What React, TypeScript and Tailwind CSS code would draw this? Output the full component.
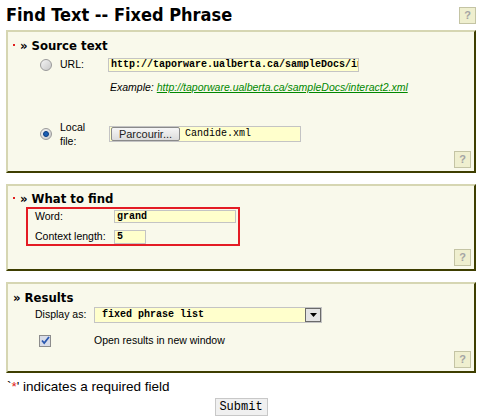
const sans = "font-['Liberation_Sans',Arial,sans-serif]";
const head = "font-['DejaVu_Sans_Condensed','DejaVu_Sans',sans-serif]";
const mono = "font-['Liberation_Mono','Courier_New',monospace]";

function HelpButton() {
  return (
    <div className="w-[17px] h-[17px] border border-[#c4c4a4] bg-[#efefcf] flex items-center justify-center text-[11px] font-bold text-[#a4a4a4] leading-none">
      ?
    </div>
  );
}

function Radio({ checked }: { checked?: boolean }) {
  return (
    <div className="w-[12px] h-[12px] rounded-full border border-[#9a9a9a] bg-gradient-to-br from-[#f4f4f4] to-[#c8c8c8] flex items-center justify-center">
      {checked && <div className="w-[6px] h-[6px] rounded-full bg-[#1a5fb4] border border-[#0a3a80]" />}
    </div>
  );
}

function Heading({ label, required }: { label: string; required?: boolean }) {
  return (
    <div className={`flex items-center h-[14px] ${head} font-bold text-[13px] leading-none`}>
      {required ? (
        <div className="w-[7px] flex items-center">
          <span className="w-[2px] h-[2px] bg-[#e02020] ml-[5px]" />
        </div>
      ) : null}
      <span className="ml-[5px]">»</span>
      <span className="ml-[4px]">{label}</span>
    </div>
  );
}

function Panel({ h, children }: { h: string; children: React.ReactNode }) {
  return (
    <div className={`${h} flex flex-col bg-[#f9f9eb] border-2 border-t-[#d6d6b2] border-l-[#d6d6b2] border-r-[#3e3e00] border-b-[#3e3e00]`}>
      {children}
      <div className="mt-auto flex justify-end pr-[3px] pb-[3px]">
        <HelpButton />
      </div>
    </div>
  );
}

export default function App() {
  return (
    <div className={`w-[489px] h-[420px] bg-white pl-[6px] ${sans} text-[10.5px] text-black`}>
      <div className="w-[470px]">
        <div className="flex items-center justify-between h-[22px] mt-[4px]">
          <h1 className={`${head} font-bold text-[18px] leading-none`}>Find Text -- Fixed Phrase</h1>
          <HelpButton />
        </div>

        <div className="mt-[4px]">
          <Panel h="h-[143px]">
            <div className="mt-[6px]">
              <Heading label="Source text" required />
            </div>
            <div className="flex items-center h-[14px] mt-[6px]">
              <div className="ml-[32px]"><Radio /></div>
              <span className="ml-[8px] w-[48px]">URL:</span>
              <div className={`w-[251px] h-[14px] bg-[#ffffcc] border border-[#c4c4c4] ${mono} font-bold text-[10px] leading-[12px] pl-[2px] overflow-hidden whitespace-nowrap`}>
                http://taporware.ualberta.ca/sampleDocs/interact2.xml
              </div>
            </div>
            <div className="flex items-center h-[14px] mt-[9px] ml-[102px] italic">
              <span>Example:</span>
              <a className="ml-[3px] text-[#008800] underline">http://taporware.ualberta.ca/sampleDocs/interact2.xml</a>
            </div>
            <div className="flex items-center mt-[25px]">
              <div className="ml-[32px]"><Radio checked /></div>
              <div className="ml-[8px] w-[49px] leading-[14px]">Local<br />file:</div>
              <div className="w-[192px] h-[16px] bg-[#ffffcc] border border-[#c4c4c4] flex items-center">
                <div className="ml-[1px] w-[69px] h-[14px] rounded-[2px] border border-[#8a8a8a] bg-gradient-to-b from-[#f6f6f6] to-[#dcdcdc] flex items-center justify-center text-[11px] leading-none text-[#222]">
                  Parcourir...
                </div>
                <span className={`ml-[5px] ${mono} text-[10px] leading-none`}>Candide.xml</span>
              </div>
            </div>
          </Panel>
        </div>

        <div className="mt-[11px]">
          <Panel h="h-[87px]">
            <div className="mt-[5px]">
              <Heading label="What to find" required />
            </div>
            <div className="ml-[18px] mt-[2px] w-[214px] h-[39px] border-2 border-[#e41c24] flex flex-col">
              <div className="flex items-center h-[13px] mt-[1px]">
                <span className="ml-[7px] w-[79px]">Word:</span>
                <div className={`w-[122px] h-[13px] bg-[#ffffcc] border border-[#c4c4c4] ${mono} font-bold text-[10px] leading-[11px] pl-[2px]`}>grand</div>
              </div>
              <div className="flex items-center h-[14px] mt-[7px]">
                <span className="ml-[7px] w-[79px]">Context length:</span>
                <div className={`w-[32px] h-[14px] bg-[#ffffcc] border border-[#c4c4c4] ${mono} font-bold text-[10px] leading-[12px] pl-[2px]`}>5</div>
              </div>
            </div>
          </Panel>
        </div>

        <div className="mt-[11px]">
          <Panel h="h-[91px]">
            <div className="mt-[6px]">
              <Heading label="Results" />
            </div>
            <div className="flex items-center h-[16px] mt-[3px]">
              <span className="ml-[27px] w-[59px]">Display as:</span>
              <div className="w-[228px] h-[16px] bg-[#ffffcc] border border-[#c4c4c4] flex items-center">
                <span className={`flex-1 pl-[7px] ${mono} font-bold text-[10px] leading-none`}>fixed phrase list</span>
                <div className="w-[16px] h-[14px] border border-[#6a6a6a] bg-[#e4e4e4] flex items-center justify-center">
                  <svg width="7" height="4" viewBox="0 0 7 4"><path d="M0 0h7L3.5 4z" fill="#000" /></svg>
                </div>
              </div>
            </div>
            <div className="flex items-center h-[13px] mt-[11px]">
              <div className="ml-[31px] w-[12px] h-[12px] border border-[#8c8c8c] bg-[#d8dce8] flex items-center justify-center">
                <svg width="9" height="9" viewBox="0 0 9 9"><path d="M1 4.5l2.2 2.5L8 1" stroke="#2a58b0" strokeWidth="1.8" fill="none" /></svg>
              </div>
              <span className="ml-[43px]">Open results in new window</span>
            </div>
          </Panel>
        </div>

        <div className="mt-[7px] ml-[1px] text-[13.5px] leading-[14px]">
          `<span className="text-[#e02020]">*</span>' indicates a required field
        </div>
        <div className="flex justify-center mt-[4px]">
          <div className={`w-[53px] h-[18px] bg-[#f0f0f0] border border-[#c8c8c8] flex items-center justify-center ${mono} text-[12px] leading-none`}>
            Submit
          </div>
        </div>
      </div>
    </div>
  );
}
